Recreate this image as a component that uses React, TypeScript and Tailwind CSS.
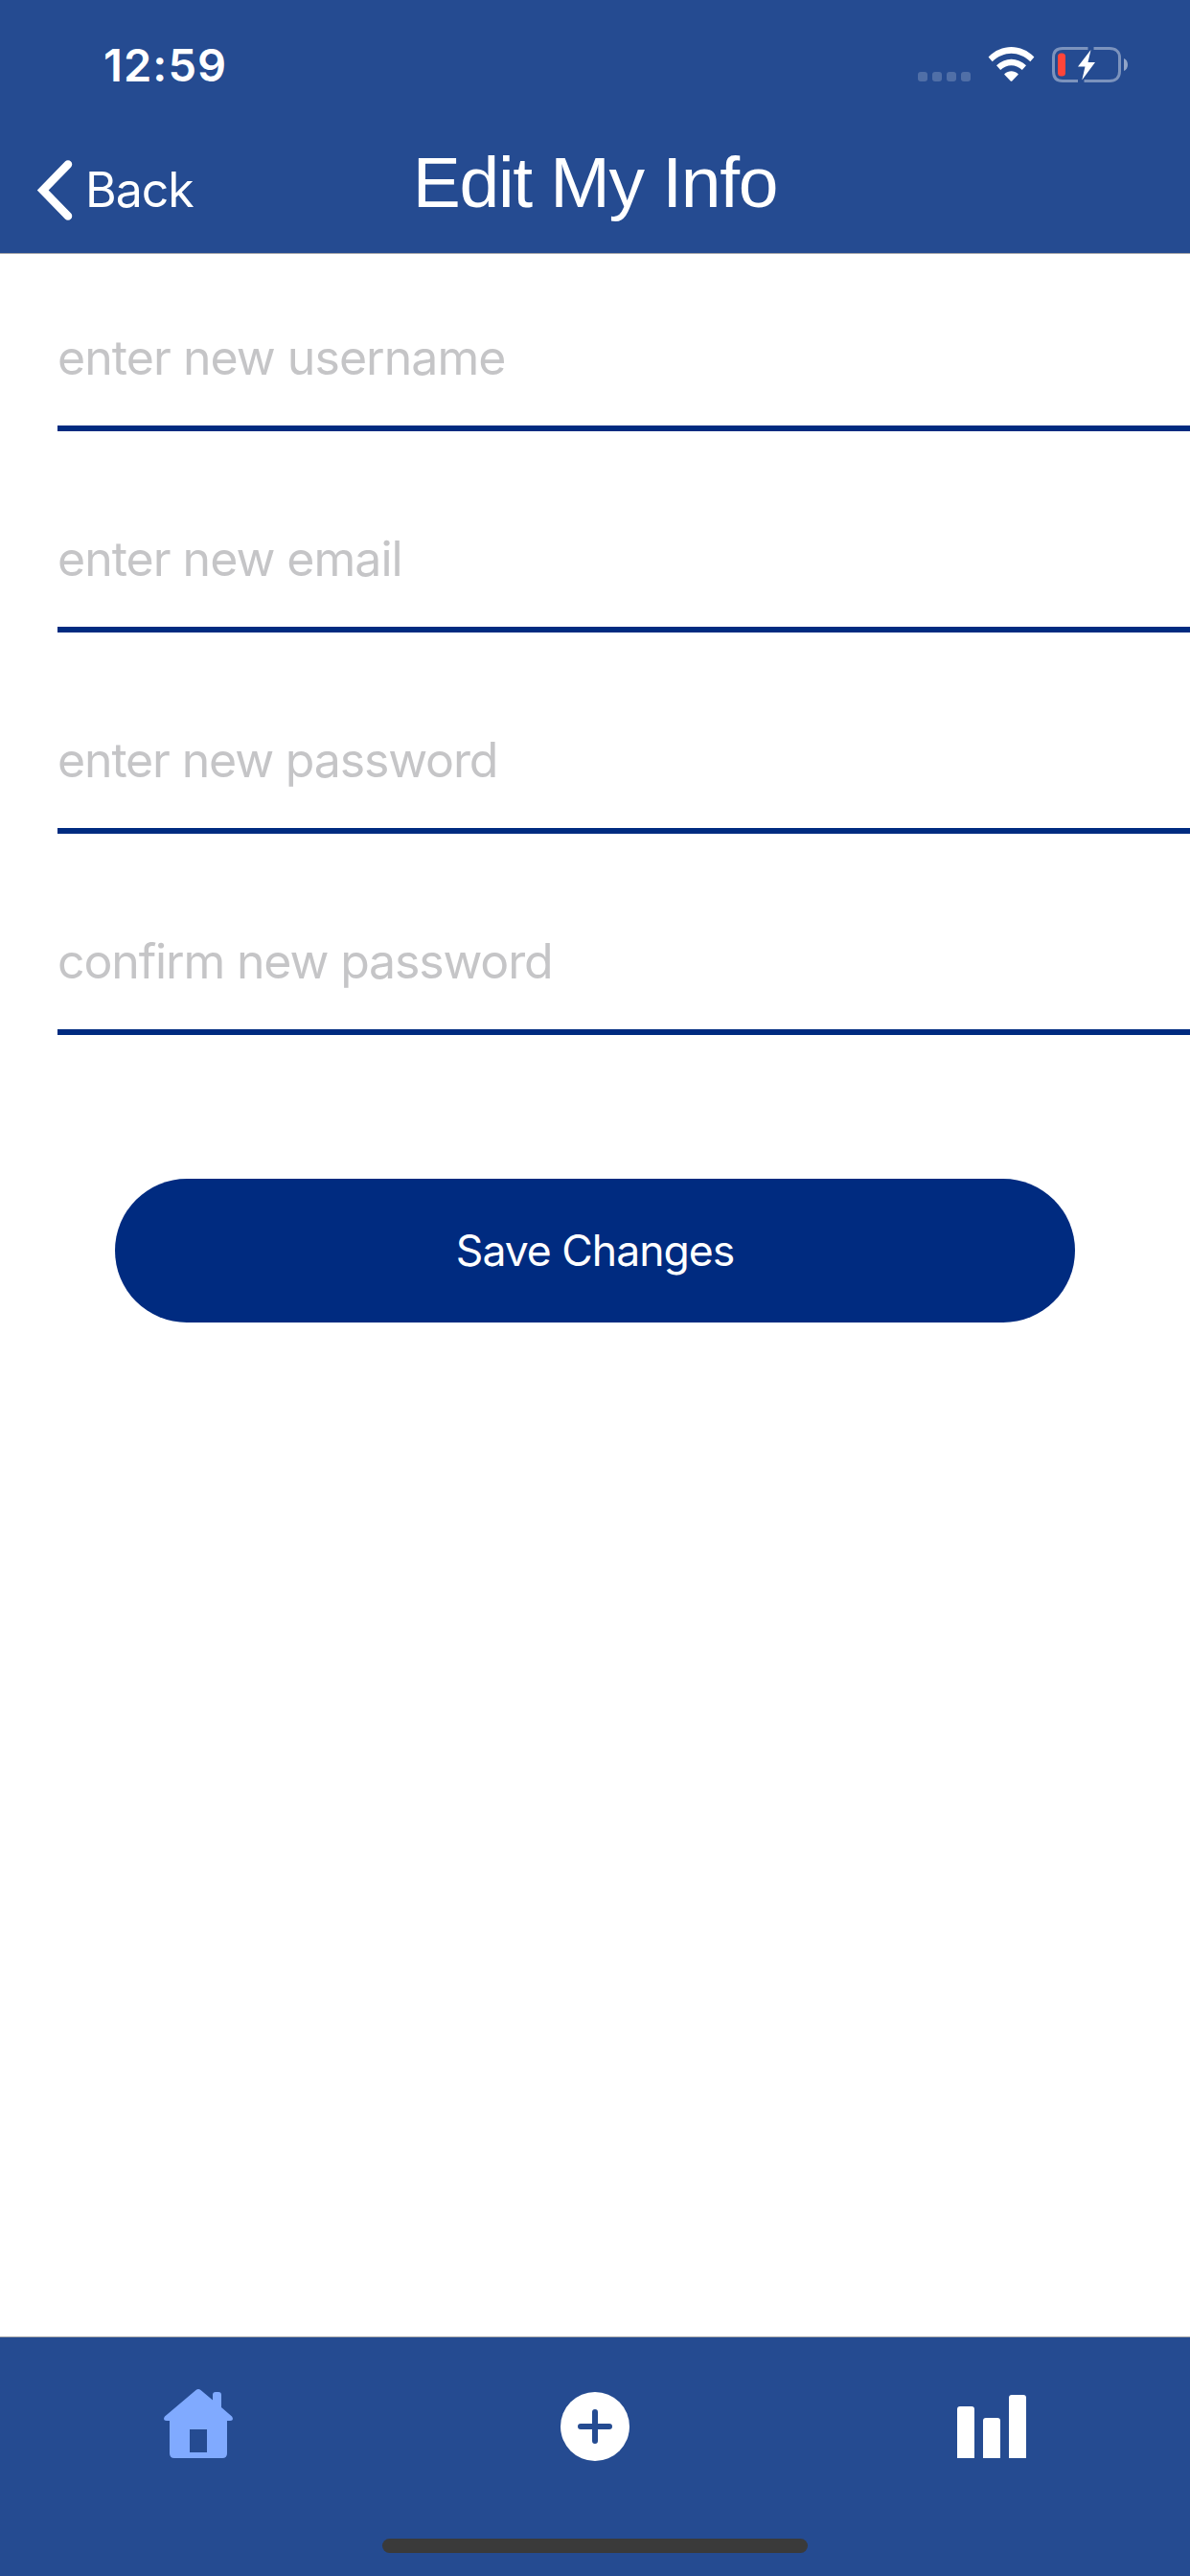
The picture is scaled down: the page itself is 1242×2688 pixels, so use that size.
const fields = [
  { name: "username", type: "text", placeholder: "enter new username", tracking: "tracking-[-0.95px]" },
  { name: "email", type: "email", placeholder: "enter new email", tracking: "tracking-[-1px]" },
  { name: "password", type: "password", placeholder: "enter new password", tracking: "tracking-[-1.15px]" },
  { name: "confirm", type: "password", placeholder: "confirm new password", tracking: "tracking-[-1.15px]" },
];

function StatusBar() {
  return (
    <div className="flex h-[132px] items-start justify-between pr-[64px] pl-[108px]">
      <span className="mt-[38px] text-[47px] leading-[60px] font-semibold tracking-[1.1px]">12:59</span>
      <div className="mt-[48px] flex">
        <svg className="h-[40px] w-[56px]" viewBox="0 0 56 40" fill="#fff" fillOpacity="0.2">
          <rect x="0" y="27" width="10" height="10" rx="3" />
          <rect x="15" y="27" width="10" height="10" rx="3" />
          <rect x="30" y="27" width="10" height="10" rx="3" />
          <rect x="45" y="27" width="10" height="10" rx="3" />
        </svg>
        <svg className="ml-[17px] h-[40px] w-[50px]" viewBox="0 0 50 40" fill="#fff">
          <path d="M.6 11.600C14-2.400 35-2.400 48.400 11.600L44.300 16.200C32.500 4.800 16.500 4.800 4.700 16.200Z" />
          <path d="M9 20.300C18 11.600 31 11.600 40 20.300L35.800 25C29 18.700 20 18.700 13.200 25Z" />
          <path d="M17.500 29C21.700 25.400 27.300 25.400 31.500 29C31.900 29.400 31.900 29.700 31.500 30.100L25.300 36.400C24.800 36.900 24.200 36.900 23.700 36.400L17.500 30.100C17.100 29.700 17.100 29.400 17.500 29Z" />
        </svg>
        <svg className="ml-[15px] h-[40px] w-[82px]" viewBox="0 0 82 40">
          <path d="M39.500 2.500H13C6 2.500 3.500 6 3.500 12V26.500C3.500 33 7 36.500 13 36.500H29M45.500 2.500H62C68.500 2.500 72.500 6 72.500 12V26.500C72.500 33 68.500 36.500 62 36.500H35.500" fill="none" stroke="#fff" strokeOpacity="0.4" strokeWidth="3" />
          <path d="M77 13C82.300 15 82.300 24 77 26Z" fill="#fff" fillOpacity="0.5" />
          <rect x="8" y="7.500" width="8" height="24" rx="3.500" fill="#ff453a" />
          <path d="M42.500 4L29 21.500H36.500L33.300 35.500L47 17H39.500Z" fill="#fff" />
        </svg>
      </div>
    </div>
  );
}

function Header() {
  return (
    <header className="h-[265px] border-b border-[#a7a7aa] bg-[#254b91] text-white">
      <StatusBar />
      <div className="grid h-[132px] grid-cols-[400px_1fr_400px]">
        <button className="flex items-start pl-[36px] text-left">
          <svg className="mt-[33px] h-[66px] w-[40px]" viewBox="0 0 40 66" fill="none" stroke="#fff" strokeWidth="8.500" strokeLinecap="round" strokeLinejoin="miter">
            <path d="M35 6.500L8.700 33.500L35 60.500" />
          </svg>
          <span className="mt-[36px] ml-[13px] text-[50px] leading-[60px] tracking-[-1px]">Back</span>
        </button>
        <h1 className="mt-[18px] text-center font-['Liberation_Sans',Arial,sans-serif] text-[75px] leading-[80px] tracking-[-1.3px] whitespace-nowrap">Edit My Info</h1>
      </div>
    </header>
  );
}

function TabBar() {
  return (
    <nav className="grid h-[250px] grid-cols-3 content-start items-start justify-items-center border-t border-[#a7a7aa] bg-[#254b91] pt-[53px]">
      <button className="mt-px h-[72px] w-[72px]" aria-label="Home">
        <svg viewBox="2 0 72 72" fill="#80aaff">
          <path fillRule="evenodd" d="M35.500 1Q38 -.8 40.500 1L53 11.500V6Q53 3 56 3H59Q62 3 62 6V19L73 28.500Q74.600 30.500 73.500 32.200Q72.800 33 71 33H68V67Q68 72 63 72H13Q8 72 8 67V33H5Q3.200 33 2.500 32.200Q1.400 30.500 3 28.500ZM29 42V66H47V42Z" />
        </svg>
      </button>
      <button className="mt-[4px] h-[72px] w-[72px]" aria-label="Add">
        <svg viewBox="0 0 72 72">
          <circle cx="36" cy="36" r="36" fill="#fff" />
          <path d="M36 21V51M21 36H51" stroke="#254b91" strokeWidth="6" strokeLinecap="round" />
        </svg>
      </button>
      <button className="mt-px h-[72px] w-[72px]" aria-label="Statistics">
        <svg viewBox="0 0 72 72" fill="#fff">
          <path d="M0 72V21Q0 18 3 18H15Q18 18 18 21V72ZM27 72V33Q27 30 30 30H42Q45 30 45 33V72ZM54 72V9Q54 6 57 6H69Q72 6 72 9V72Z" />
        </svg>
      </button>
      <div className="col-span-3 mt-[81px] h-[15px] w-[444px] rounded-full bg-[#3a3a3a]" />
    </nav>
  );
}

export default function App() {
  return (
    <div className="flex h-[2688px] w-[1242px] flex-col overflow-hidden bg-white font-[Inter,sans-serif]">
      <Header />
      <main className="flex flex-1 flex-col">
        <form className="flex flex-1 flex-col">
          <div className="flex flex-col pl-[60px]">
            {fields.map((f) => (
              <label key={f.name} className="flex h-[210px] flex-col justify-end border-b-[6px] border-[#002b80] first:h-[185px]">
                <input type={f.type} placeholder={f.placeholder} className={`mb-[39px] h-[64px] w-full text-[50px] leading-[64px] outline-none placeholder:text-[#c5c5c7] ${f.tracking}`} />
              </label>
            ))}
          </div>
          <button type="button" className="mx-[120px] mt-[150px] h-[150px] rounded-full bg-[#002b80] text-[44.5px] tracking-[-1px] text-white">Save Changes</button>
        </form>
      </main>
      <TabBar />
    </div>
  );
}
